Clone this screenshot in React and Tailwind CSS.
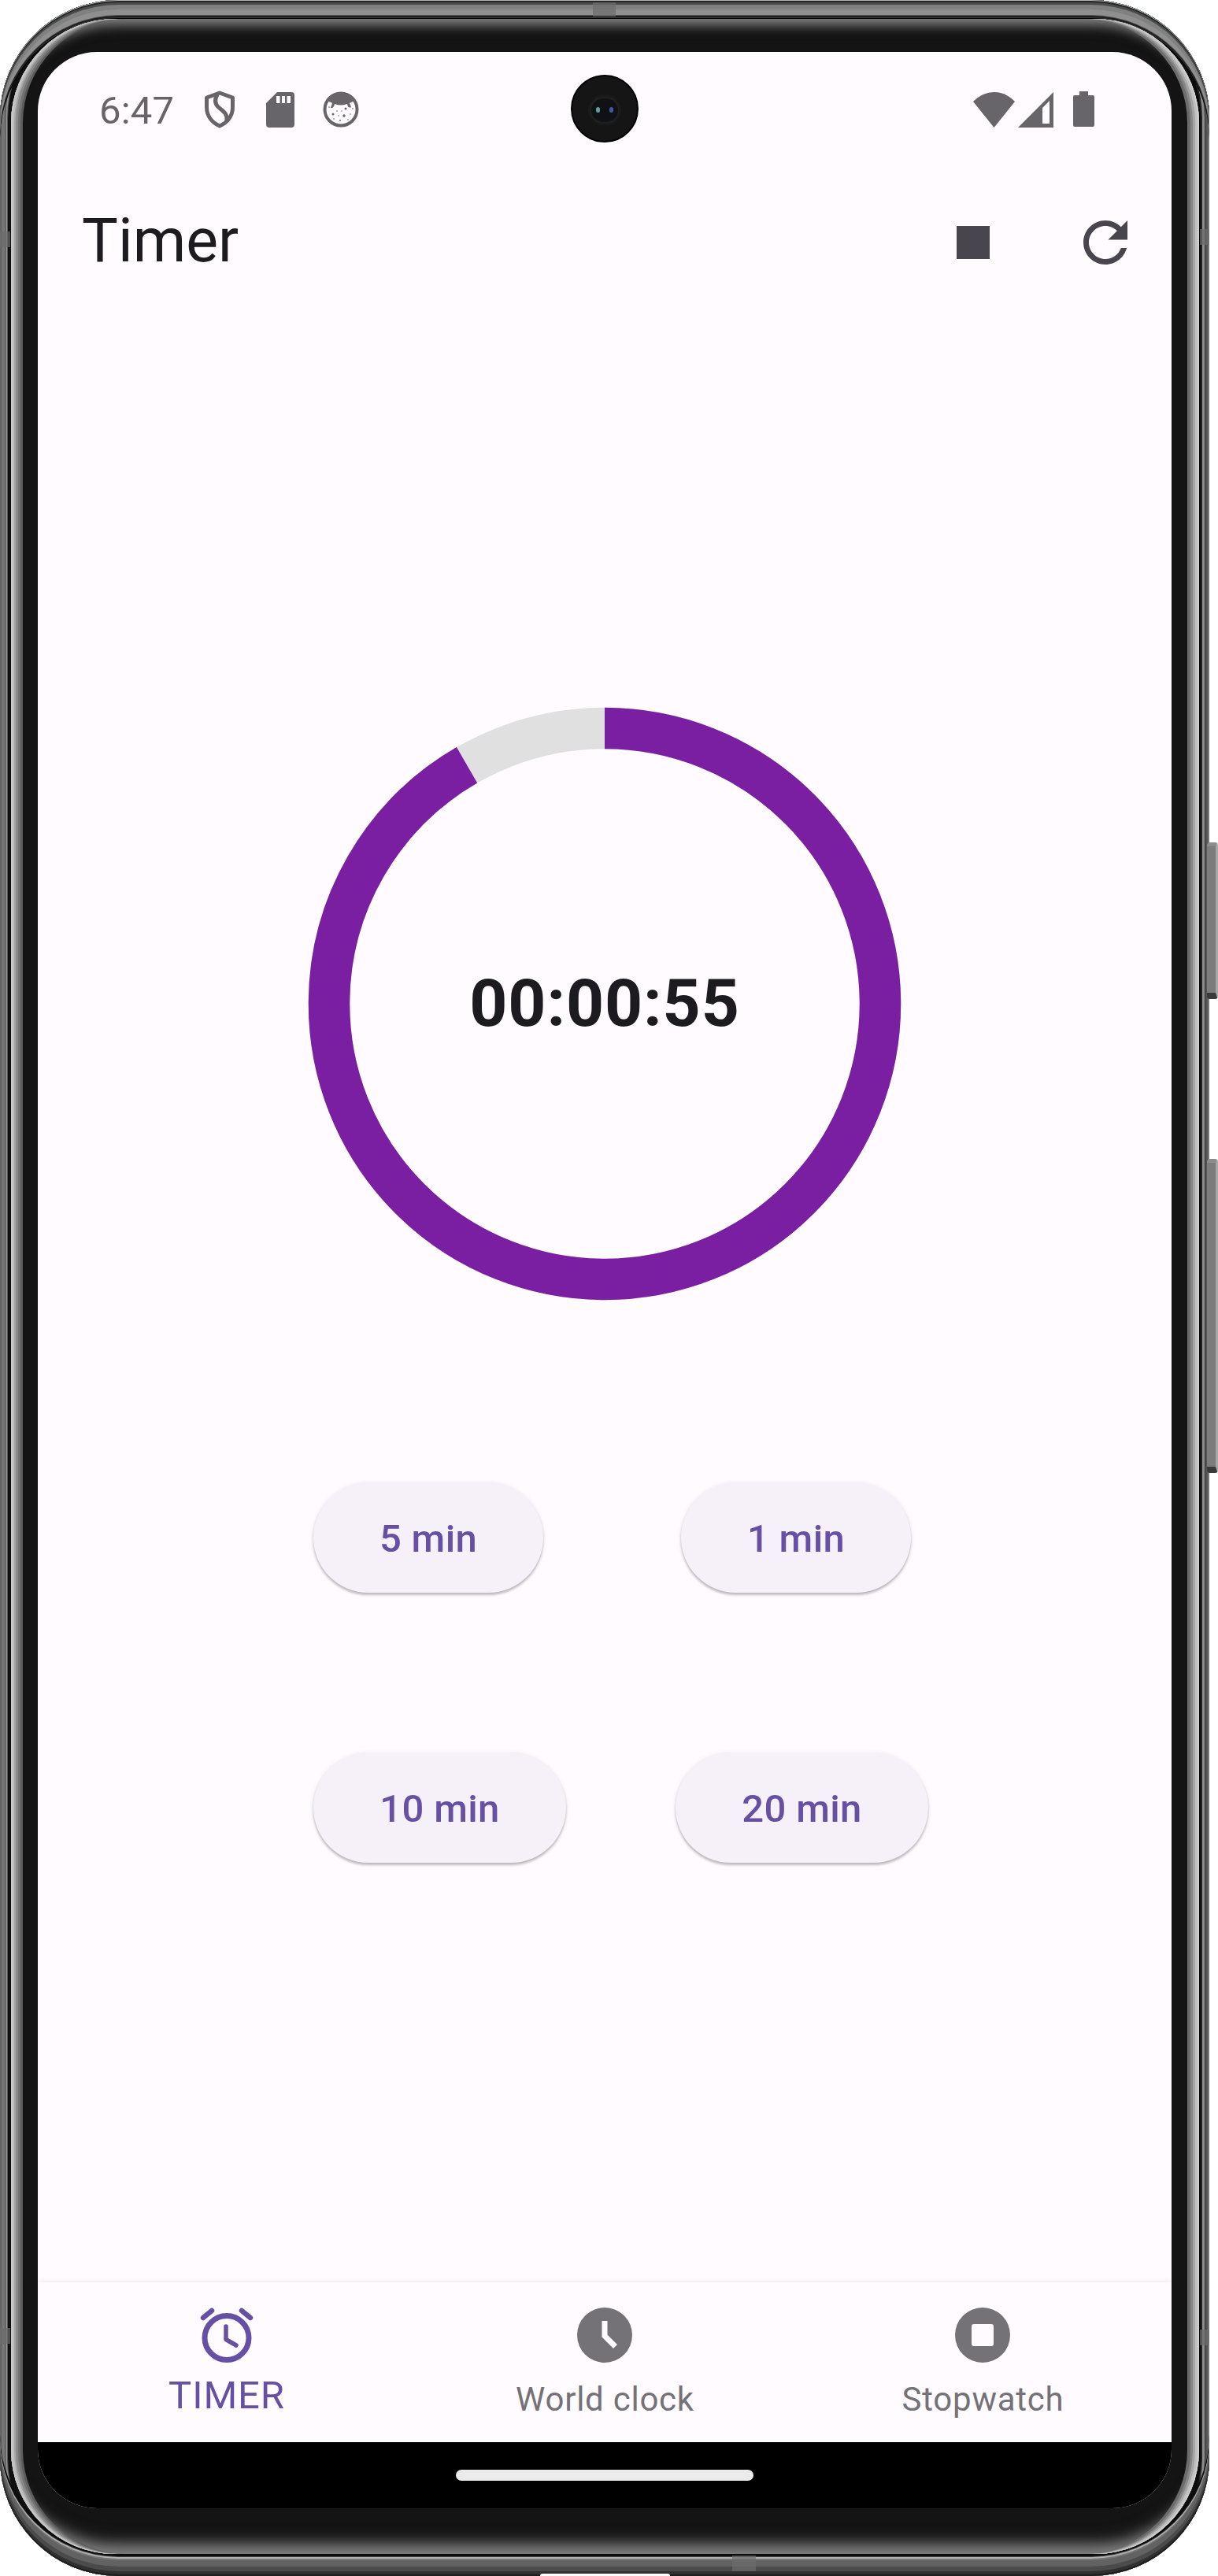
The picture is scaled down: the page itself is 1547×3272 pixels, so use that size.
import React from "react";

const rim =
  "shadow-[inset_0_1px_0_#b4b8b5,inset_0_3px_0_#242725,inset_0_6px_0_#4a4b4a,inset_0_12px_0_#808080,inset_0_19px_0_#8f8f8f,inset_0_20px_0_#555,inset_0_22px_0_#1d1d1d,inset_0_23px_0_#3a3a3a,inset_0_26px_0_#050505,inset_0_-2px_0_#1d1d1d,inset_0_-6px_0_#303030,inset_0_-12px_0_#4b4b4b,inset_0_-20px_0_#626262,inset_0_-22px_0_#777,inset_0_-24px_0_#b0b0b0,inset_0_-25px_0_#444,inset_0_-30px_0_#0c0c0c,inset_3px_0_0_#666,inset_6px_0_0_#7a7a7a,inset_7px_0_0_#444,inset_9px_0_0_#8d8d8d,inset_10px_0_0_#555,inset_15px_0_0_#101010,inset_-2px_0_0_#777,inset_-5px_0_0_#555,inset_-6px_0_0_#333,inset_-9px_0_0_#8d8d8d,inset_-11px_0_0_#222,inset_-15px_0_0_#0b0b0b]";

const glass =
  "shadow-[inset_2px_0_0_#c9c9c9,inset_4px_0_0_#bdbdbd,inset_6px_0_0_#a5a5a5,inset_9px_0_0_#8a8a8a,inset_12px_0_0_#737373,inset_15px_0_0_#5c5c5c,inset_-2px_0_0_#d0d0d0,inset_-5px_0_0_#c0c0c0,inset_-8px_0_0_#a5a5a5,inset_-11px_0_0_#868686,inset_-15px_0_0_#6c6c6c,inset_0_16px_14px_-10px_#858585,inset_0_26px_14px_-14px_#303030,inset_0_-20px_16px_-10px_#808080,inset_0_-34px_18px_-16px_#383838]";

function Seam({ className }) {
  return <div className={"absolute bg-[#6c6c6c] opacity-70 " + className} />;
}

function StatusBar() {
  return (
    <div className="flex h-[146px] items-center justify-between pl-[78px] pr-[98px] text-[#67646a]">
      <div className="flex items-center">
        <span className="w-[95px] pt-[2px] text-[49px] leading-none tracking-[0.2px]">6:47</span>
        <svg className="ml-[37px] h-[48px] w-[42px]" viewBox="0 0 42 48" fill="none" stroke="currentColor" strokeWidth="5" strokeLinejoin="round">
          <path d="M21 3 L37.500 9 V21 C37.500 33 30 41 21 45 C12 41 4.500 33 4.500 21 V9 Z" />
          <path d="M18 5 C14 12 15 18 21 22.500 C28 28 31 31 30 39" />
        </svg>
        <svg className="ml-[38px] h-[45px] w-[36px]" viewBox="0 0 36 45" fill="currentColor" fillRule="evenodd">
          <path d="M14 0 H32 Q36 0 36 4 V41 Q36 45 32 45 H4 Q0 45 0 41 V14 Z M13 5 V14 H17.500 V5 Z M20 5 V14 H24 V5 Z M26.500 5 V14 H31 V5 Z" />
        </svg>
        <svg className="ml-[36px] h-[46px] w-[46px]" viewBox="0 0 46 46" fill="currentColor">
          <circle cx="23" cy="23" r="20.500" fill="none" stroke="currentColor" strokeWidth="4" />
          <path d="M6 12 Q14 2 23 2 Q32 2 40 12 L34 15 L36 20 Q32 22 31 16 Q23 19 15 16 Q14 22 10 21 L12 15 Z" />
          <circle cx="13" cy="29" r="1.500" /><circle cx="29" cy="22" r="1.500" /><circle cx="27" cy="31" r="1.700" />
          <circle cx="20" cy="31" r=".8" /><circle cx="35" cy="29" r=".8" /><circle cx="18" cy="25" r=".8" />
          <circle cx="22" cy="37" r=".9" /><circle cx="8" cy="20" r=".8" /><circle cx="38" cy="22" r=".8" />
          <circle cx="32" cy="36" r=".8" /><circle cx="14" cy="35" r=".8" /><circle cx="24" cy="25" r=".7" />
        </svg>
      </div>
      <div className="flex items-center">
        <svg className="h-[45px] w-[53px]" viewBox="0 0 53 45" fill="currentColor">
          <path d="M0 12 Q12 0 26.500 0 Q41 0 53 12 L26.500 45 Z" />
        </svg>
        <svg className="ml-[4px] h-[45px] w-[45px]" viewBox="0 0 45 45" fill="currentColor" fillRule="evenodd">
          <path d="M0 45 L45 0 V45 Z M31 20 V40 H40 V11 Z" />
        </svg>
        <svg className="ml-[25px] h-[46px] w-[27px]" viewBox="0 0 27 46" fill="currentColor">
          <path d="M8 0 H19 V5 H25 Q27 5 27 7 V43 Q27 45 25 45 H2 Q0 45 0 43 V7 Q0 5 2 5 H8 Z" />
        </svg>
      </div>
    </div>
  );
}

function AppBar() {
  return (
    <header className="flex h-[192px] items-center justify-between pl-[56px] pr-[42px] text-[#48454e]">
      <h1 className="pb-[3px] text-[77px] font-normal leading-none text-[#1c1b1f]">Timer</h1>
      <div className="flex items-center gap-[84px]">
        <svg className="h-[84px] w-[84px]" viewBox="0 0 24 24" fill="currentColor">
          <path d="M6 6h12v12H6z" />
        </svg>
        <svg className="h-[84px] w-[84px]" viewBox="0 0 24 24" fill="currentColor">
          <path d="M17.65 6.35C16.2 4.9 14.21 4 12 4c-4.420 0-7.990 3.580-7.990 8s3.570 8 7.990 8c3.730 0 6.840-2.550 7.730-6h-2.080c-.82 2.330-3.040 4-5.650 4-3.310 0-6-2.690-6-6s2.690-6 6-6c1.660 0 3.140.69 4.220 1.780L13 11h7V4l-2.350 2.350z" />
        </svg>
      </div>
    </header>
  );
}

function Dial() {
  return (
    <div className="grid h-[754px] w-[754px] place-items-center self-center">
      <svg className="col-start-1 row-start-1 h-[754px] w-[754px] -rotate-90" viewBox="0 0 754 754" fill="none" strokeWidth="52.5">
        <circle cx="377" cy="377" r="350" stroke="#e0e0e0" />
        <circle cx="377" cy="377" r="350" stroke="#7b1fa2" pathLength="60" strokeDasharray="55 5" />
      </svg>
      <span className="col-start-1 row-start-1 text-[84px] font-bold leading-none tracking-[0.875px] text-[#1c1b1f]">00:00:55</span>
    </div>
  );
}

function Preset({ children, className }) {
  return (
    <button className={"flex h-[140px] items-center justify-center rounded-full bg-[#f6f1f9] pt-[2px] text-[49px] font-medium leading-none tracking-[0.35px] text-[#6750a4] shadow-[0_3px_3px_#00000038,0_1px_6px_#00000018] " + className}>
      {children}
    </button>
  );
}

function NavBar() {
  return (
    <nav className="grid h-[203px] grid-cols-3 bg-[#fffbff] text-[#757277] shadow-[0_-2px_6px_#00000012]">
      <div className="flex flex-col items-center pt-[28px] text-[#6750a4]">
        <svg className="h-[84px] w-[84px]" viewBox="0 0 84 84" fill="none" stroke="currentColor" strokeLinecap="round">
          <circle cx="42" cy="42.500" r="28" strokeWidth="7" />
          <path d="M41 28 V44.500 L54 52" strokeWidth="5.500" strokeLinejoin="round" />
          <path d="M12 17 L23 8 M61 8 L72 17" strokeWidth="6.500" />
        </svg>
        <span className="mt-[4px] text-[49px] leading-[56px] tracking-[0.875px]">TIMER</span>
      </div>
      <div className="flex flex-col items-center pt-[28px]">
        <svg className="h-[84px] w-[84px]" viewBox="0 0 84 84">
          <circle cx="42" cy="39" r="35" fill="currentColor" />
          <path d="M42 21 V40 L55.500 53.500" fill="none" stroke="#fffbff" strokeWidth="7" />
        </svg>
        <span className="mt-[13px] pl-[1px] text-[42px] leading-[48px] tracking-[0.75px]">World clock</span>
      </div>
      <div className="flex flex-col items-center pt-[28px]">
        <svg className="h-[84px] w-[84px]" viewBox="0 0 84 84">
          <circle cx="42" cy="39" r="35" fill="currentColor" />
          <rect x="28" y="25" width="28" height="28" rx="3" fill="#fffbff" />
        </svg>
        <span className="mt-[13px] pl-[1px] text-[42px] leading-[48px] tracking-[0.75px]">Stopwatch</span>
      </div>
    </nav>
  );
}

function Camera() {
  return (
    <div className="absolute left-[677px] top-[29px] grid h-[86px] w-[86px] place-items-center rounded-full border-2 border-black bg-[#151515]">
      <div className="mt-[3px] flex h-[30px] w-[34px] items-center justify-center gap-[12px] rounded-full bg-[#101114] shadow-[0_0_4px_2px_#262626]">
        <span className="h-[7px] w-[5px] rounded-full bg-[#609d9a] blur-[0.5px]" />
        <span className="h-[7px] w-[5px] rounded-full bg-[#4358aa] blur-[0.5px]" />
      </div>
    </div>
  );
}

function SideKey({ className }) {
  return (
    <div className={"absolute left-[1533px] w-[14px] rounded-[4px] border-b-[8px] border-r-[3px] border-t-[5px] border-b-[#3a3a3a] border-r-[#a8a8a8] border-t-[#8c8c8c] bg-[#7c7c7c] " + className} />
  );
}

export default function App() {
  return (
    <div className="relative h-[3272px] w-[1547px] overflow-hidden bg-white font-['Roboto',sans-serif]">
      <div className={"relative h-[3272px] w-[1536px] rounded-[150px] bg-[#101010] pb-[28px] pl-[14px] pr-[13px] pt-[24px] " + rim}>
        <div className={"h-full rounded-[132px] bg-[#141414] pl-[34px] pt-[42px] " + glass}>
          <div className="relative flex h-[3120px] w-[1440px] flex-col overflow-hidden rounded-[75px] bg-[#fffbff]">
            <StatusBar />
            <Camera />
            <AppBar />
            <main className="flex flex-1 flex-col pt-[494px]">
              <Dial />
              <div className="mt-[231px] flex pl-[350px]">
                <Preset className="w-[292px]">5 min</Preset>
                <Preset className="ml-[175px] w-[292px]">1 min</Preset>
              </div>
              <div className="mt-[203px] flex pl-[350px]">
                <Preset className="w-[321px]">10 min</Preset>
                <Preset className="ml-[139px] w-[321px]">20 min</Preset>
              </div>
            </main>
            <NavBar />
            <div className="flex h-[84px] items-center justify-center bg-black">
              <div className="h-[14px] w-[378px] rounded-full bg-[#ebebeb]" />
            </div>
          </div>
        </div>
        <Seam className="left-[753px] top-[3px] h-[18px] w-[29px]" />
        <Seam className="left-0 top-[294px] h-[20px] w-[13px]" />
        <Seam className="right-0 top-[291px] h-[20px] w-[12px]" />
        <Seam className="left-0 top-[2957px] h-[20px] w-[13px]" />
        <Seam className="right-0 top-[2959px] h-[20px] w-[12px]" />
        <Seam className="bottom-[6px] left-[930px] h-[20px] w-[30px]" />
        <div className="absolute bottom-0 left-[686px] h-[3px] w-[165px] rounded-t-full bg-white" />
      </div>
      <SideKey className="top-[1070px] h-[199px]" />
      <SideKey className="top-[1472px] h-[399px]" />
    </div>
  );
}
